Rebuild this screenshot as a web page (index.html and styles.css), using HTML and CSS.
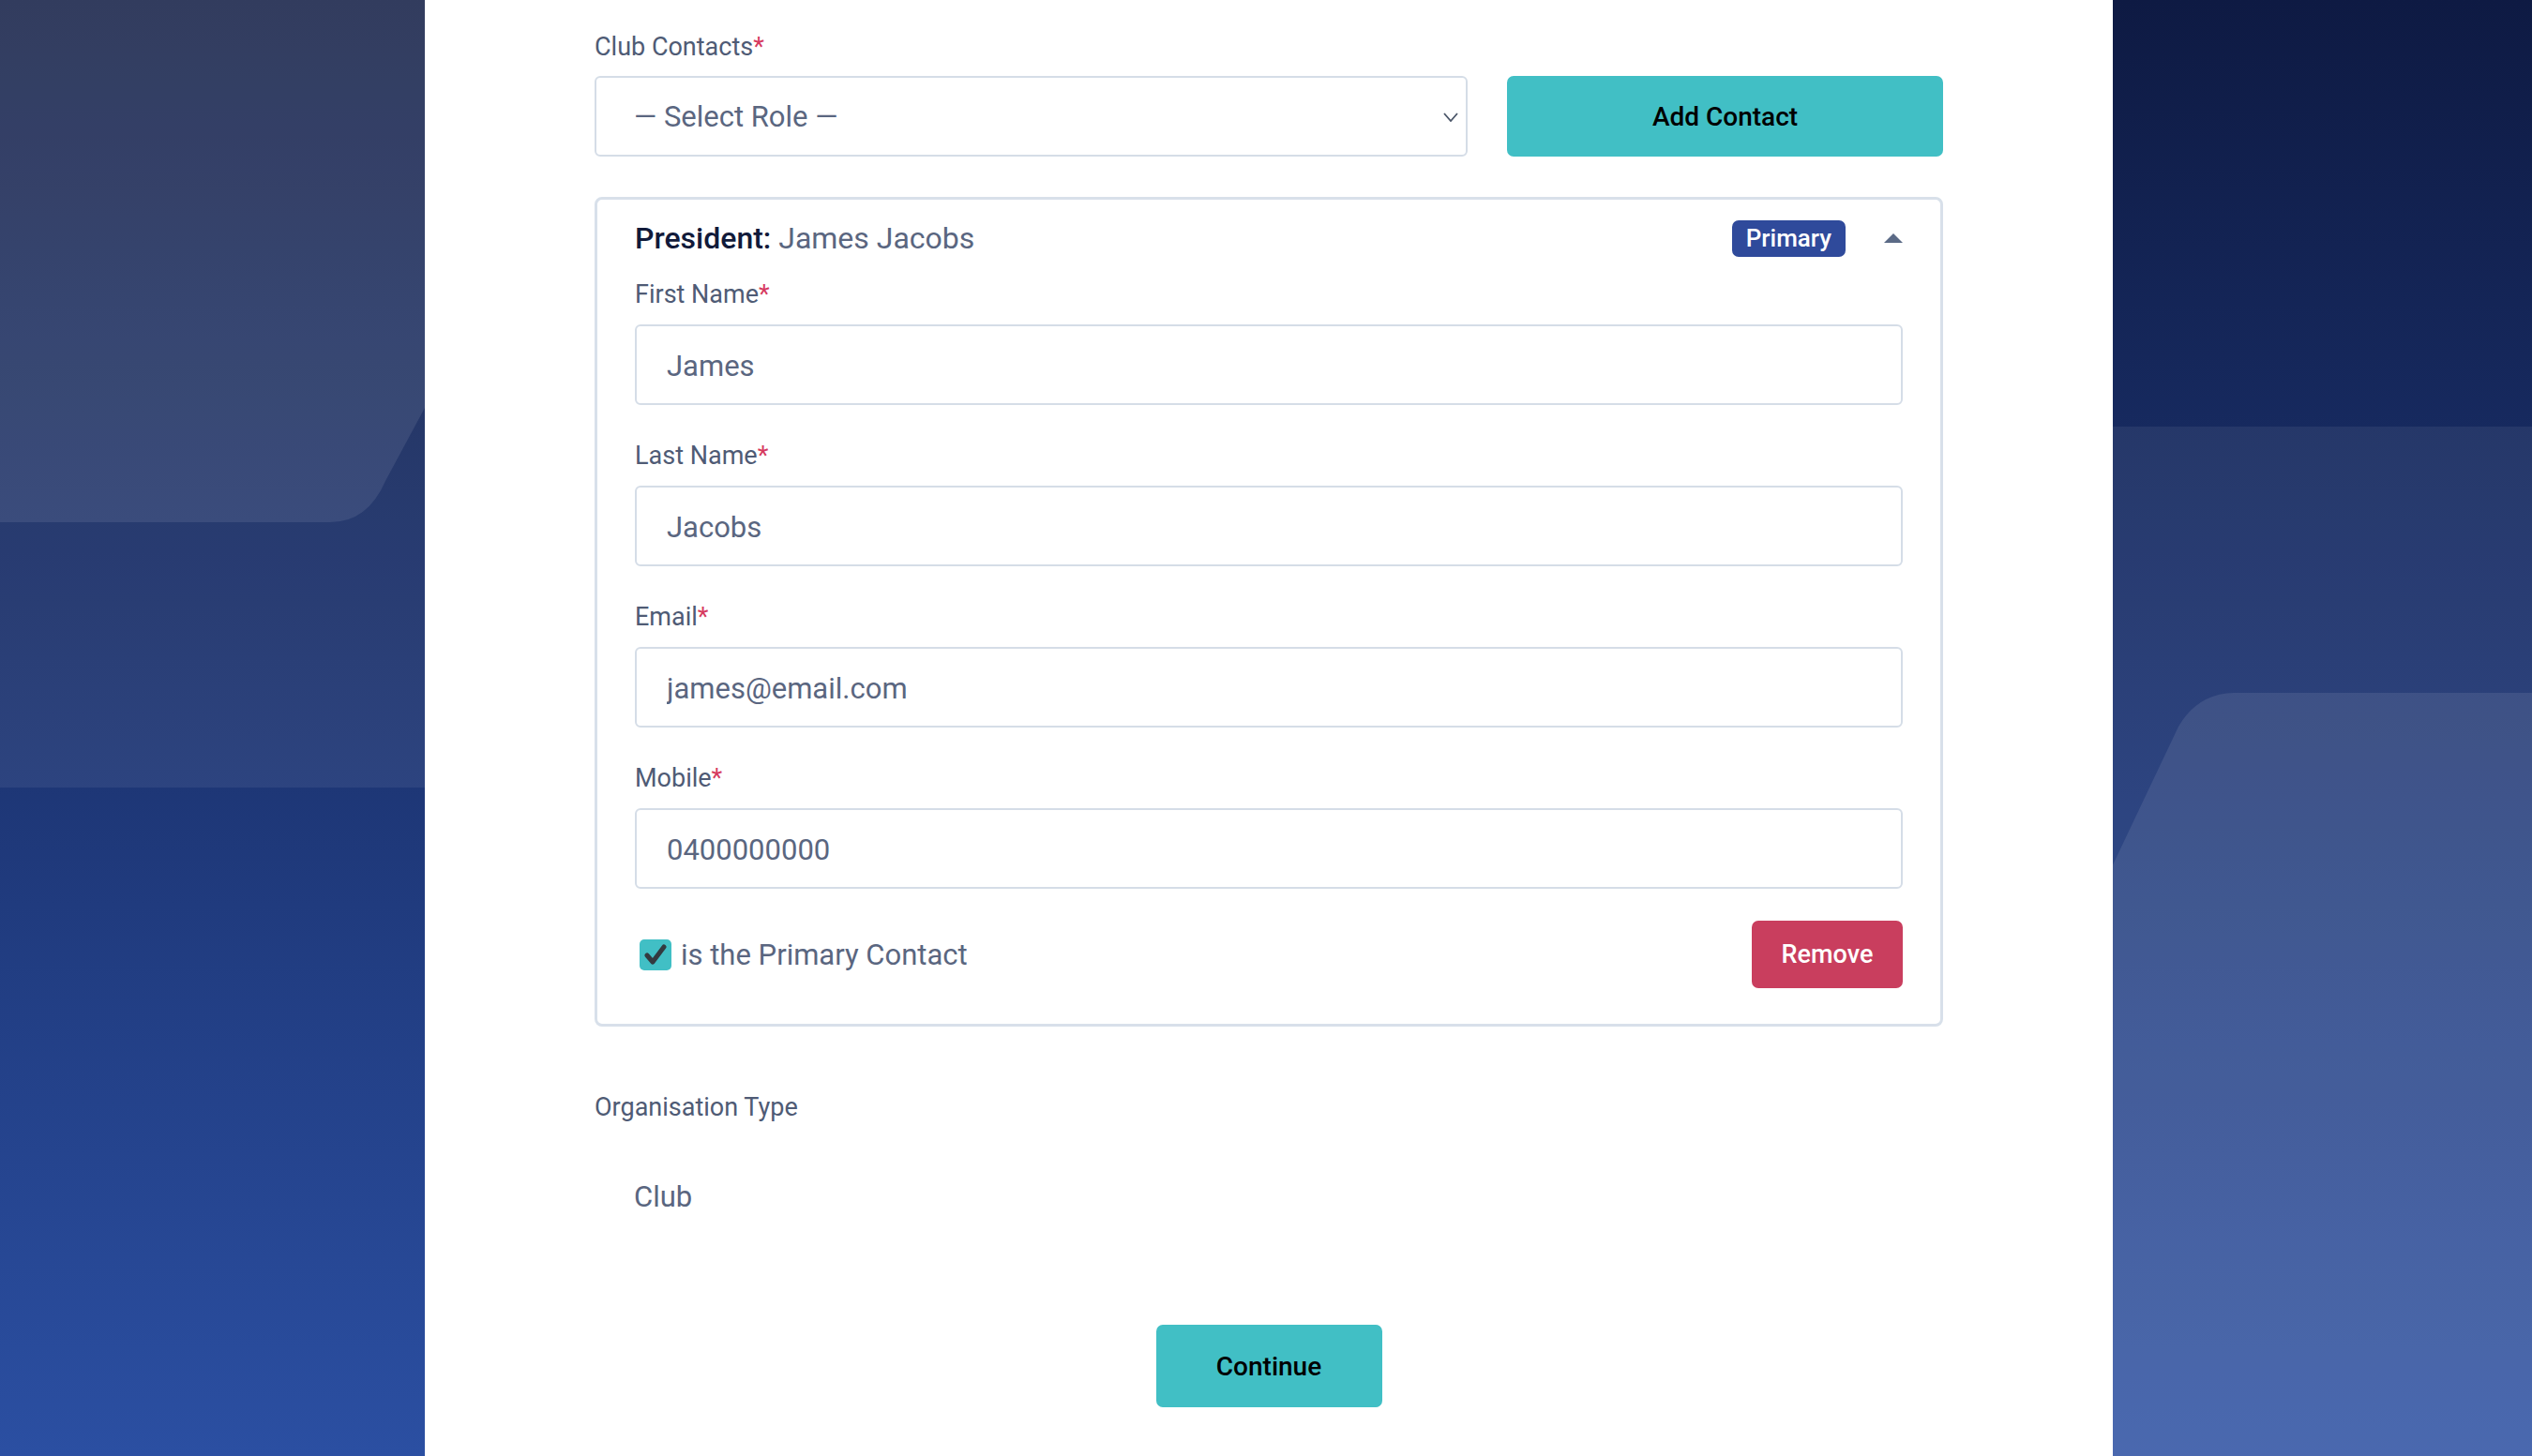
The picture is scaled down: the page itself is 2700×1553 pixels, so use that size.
FILE: index.html
```html
<!DOCTYPE html>
<html lang="en">
<head>
<meta charset="utf-8">
<title>Club Contacts</title>
<link rel="stylesheet" href="styles.css">
</head>
<body>
<svg class="backdrop" viewBox="0 0 2700 1553" preserveAspectRatio="none" aria-hidden="true">
  <defs>
    <linearGradient id="base" x1="0" y1="0" x2="0" y2="1">
      <stop offset="0" stop-color="#0e1a43"/>
      <stop offset="1" stop-color="#2b4fa2"/>
    </linearGradient>
  </defs>
  <rect width="2700" height="1553" fill="url(#base)"/>
  <rect x="0" y="0" width="470" height="840" fill="#ffffff" fill-opacity="0.065"/>
  <path d="M0 0 L687 0 L411 513 Q392 557 352 557 L0 557 Z" fill="#ffffff" fill-opacity="0.09"/>
  <rect x="2230" y="455" width="470" height="1098" fill="#ffffff" fill-opacity="0.065"/>
  <path d="M2700 739 L2382 739 Q2343 740 2323 775 L1954 1553 L2700 1553 Z" fill="#ffffff" fill-opacity="0.09"/>
</svg>

<main class="panel">
  <section class="contacts">
    <div class="field-label">Club Contacts<span class="req">*</span></div>
    <div class="contact-add">
      <div class="select">
        <span>— Select Role —</span>
        <svg class="chev" viewBox="0 0 16 10" aria-hidden="true"><path d="M1 1 L8 9 L15 1" fill="none" stroke="#4a5568" stroke-width="1.8"/></svg>
      </div>
      <button class="btn btn-teal btn-add" type="button">Add Contact</button>
    </div>

    <div class="card">
      <div class="card-head">
        <div class="card-title"><span class="role">President:</span> James Jacobs</div>
        <span class="badge">Primary</span>
        <svg class="caret" viewBox="0 0 20 10" aria-hidden="true"><path d="M0 10 L10 0 L20 10 Z" fill="#5b6a86"/></svg>
      </div>
      <div class="fields">
        <div class="field">
          <label class="field-label" for="fn">First Name<span class="req">*</span></label>
          <input class="input" id="fn" type="text" value="James">
        </div>
        <div class="field">
          <label class="field-label" for="ln">Last Name<span class="req">*</span></label>
          <input class="input" id="ln" type="text" value="Jacobs">
        </div>
        <div class="field">
          <label class="field-label" for="em">Email<span class="req">*</span></label>
          <input class="input" id="em" type="text" value="james@email.com">
        </div>
        <div class="field">
          <label class="field-label" for="mb">Mobile<span class="req">*</span></label>
          <input class="input" id="mb" type="text" value="0400000000">
        </div>
        <div class="card-foot">
          <label class="check">
            <span class="box"><svg viewBox="0 0 34 33" aria-hidden="true"><path d="M8 17 L14 24 L26 8" fill="none" stroke="#333a40" stroke-width="5" stroke-linecap="round" stroke-linejoin="round"/></svg></span>
            is the Primary Contact
          </label>
          <button class="btn btn-red" type="button">Remove</button>
        </div>
      </div>
    </div>
  </section>

  <section class="org">
    <div class="field-label">Organisation Type</div>
    <div class="org-value">Club</div>
  </section>

  <div class="actions">
    <button class="btn btn-teal btn-continue" type="button">Continue</button>
  </div>
</main>
</body>
</html>
```

FILE: styles.css
```css
html, body {
  margin: 0;
}

body {
  padding-left: 6px;
  min-height: 1553px;
  font-family: Roboto, "Liberation Sans", Arial, sans-serif;
  background: #1c3166;
  color: #58647d;
}

.backdrop {
  position: fixed;
  top: 0;
  left: 0;
  width: 100%;
  height: 100%;
  z-index: 0;
}

.panel {
  position: relative;
  z-index: 1;
  width: 1800px;
  margin: 0 auto;
  box-sizing: border-box;
  min-height: 1553px;
  background: #ffffff;
  padding: 30px 181px 52px;
}

.field-label {
  display: block;
  font-size: 27px;
  line-height: 40px;
  font-weight: 400;
  color: #4f5b75;
}

.req {
  color: #d63a60;
}

.contact-add {
  display: flex;
  gap: 42px;
  margin-top: 11px;
}

.select {
  flex: 1;
  height: 86px;
  box-sizing: border-box;
  border: 2px solid #d5dde7;
  border-radius: 6px;
  display: flex;
  align-items: center;
  justify-content: space-between;
  padding: 0 8px 0 40px;
  font-size: 31px;
  color: #5a6680;
}

.chev {
  width: 16px;
  height: 10px;
  margin-top: 2px;
}

.btn {
  border: none;
  border-radius: 7px;
  font-family: Roboto, "Liberation Sans", Arial, sans-serif;
  font-weight: 500;
  font-size: 28px;
  cursor: pointer;
}

.btn-teal {
  background: #41bfc5;
  color: #000000;
}

.btn-add {
  width: 465px;
  height: 86px;
}

.card {
  margin-top: 43px;
  border: 3px solid #d8e0ea;
  border-radius: 8px;
  padding: 21px 40px 38px;
}

.card-head {
  display: flex;
  align-items: center;
  height: 40px;
}

.card-title {
  font-size: 32px;
  line-height: 40px;
  color: #5a6680;
}

.role {
  color: #111a3a;
  font-weight: 500;
}

.badge {
  margin-left: auto;
  background: #2f4a9b;
  color: #ffffff;
  font-size: 26px;
  font-weight: 500;
  line-height: 39px;
  height: 39px;
  padding: 0 15px;
  border-radius: 7px;
}

.caret {
  width: 20px;
  height: 10px;
  margin-left: 41px;
}

.fields {
  display: flex;
  flex-direction: column;
  gap: 34px;
  margin-top: 20px;
}

.field {
  display: flex;
  flex-direction: column;
  gap: 12px;
}

.input {
  display: block;
  width: 100%;
  height: 86px;
  box-sizing: border-box;
  border: 2px solid #d5dde7;
  border-radius: 6px;
  padding: 2px 32px 0;
  font-family: Roboto, "Liberation Sans", Arial, sans-serif;
  font-size: 31px;
  color: #5a6680;
  background: #ffffff;
  outline: none;
}

.card-foot {
  display: flex;
  align-items: center;
  justify-content: space-between;
  height: 72px;
}

.check {
  display: flex;
  align-items: center;
  gap: 10px;
  font-size: 31px;
  color: #5a6680;
  padding-left: 5px;
}

.box {
  width: 34px;
  height: 33px;
  border-radius: 5px;
  background: #41bfc5;
  display: flex;
}

.box svg {
  width: 34px;
  height: 33px;
}

.btn-red {
  background: #c93e5e;
  color: #ffffff;
  width: 161px;
  height: 72px;
  font-size: 27px;
}

.org {
  margin-top: 66px;
}

.org-value {
  margin-top: 54px;
  padding-left: 42px;
  font-size: 31px;
  line-height: 44px;
  color: #5a6680;
}

.actions {
  display: flex;
  justify-content: center;
  margin-top: 114px;
}

.btn-continue {
  width: 241px;
  height: 88px;
}
```
